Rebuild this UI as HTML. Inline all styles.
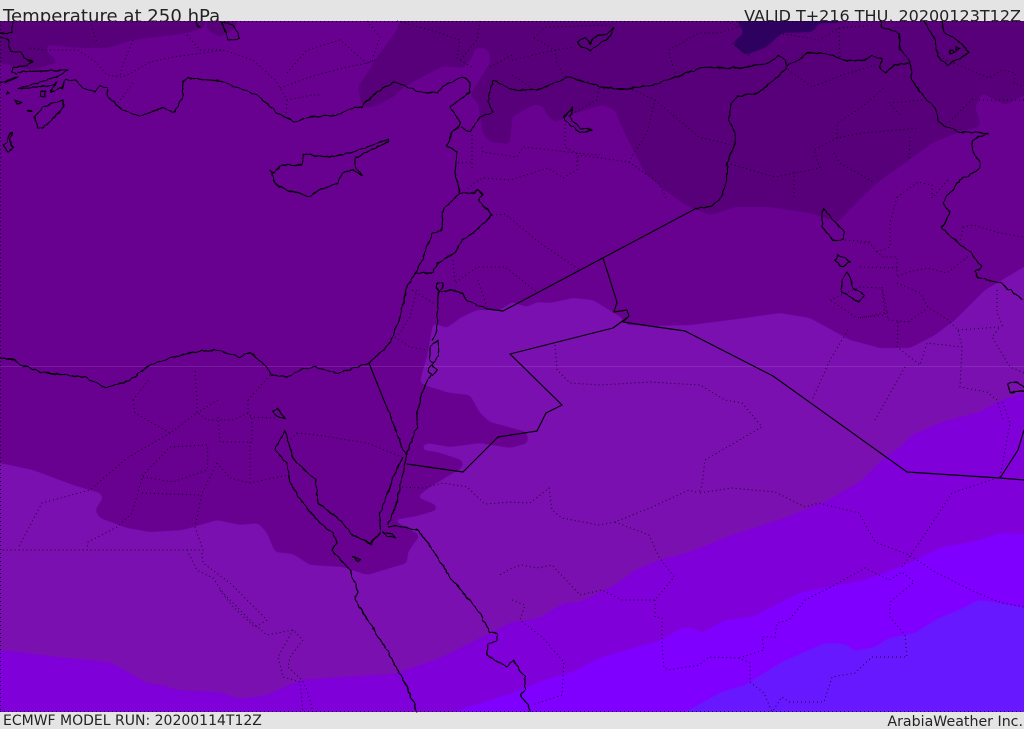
<!DOCTYPE html>
<html><head><meta charset="utf-8"><title>Temperature at 250 hPa</title>
<style>
html,body{margin:0;padding:0;background:#e4e4e4}
svg{display:block}
text{font-family:"DejaVu Sans",sans-serif;fill:#222}
.c{fill:none;stroke:#000;stroke-width:1.15;stroke-linejoin:round}
.d{fill:none;stroke:#000;stroke-width:1;stroke-dasharray:1 3;opacity:.78}
</style></head><body>
<svg width="1024" height="729" viewBox="0 0 1024 729" xmlns="http://www.w3.org/2000/svg">
<defs>
<clipPath id="m"><rect x="0" y="21" width="1024" height="691"/></clipPath>
<filter id="s" filterUnits="userSpaceOnUse" x="-40" y="-10" width="1104" height="760" color-interpolation-filters="sRGB">
<feGaussianBlur stdDeviation="2.4"/>
<feComponentTransfer><feFuncA type="linear" slope="6" intercept="-2.5"/></feComponentTransfer>
</filter>
<filter id="w" filterUnits="userSpaceOnUse" x="0" y="0" width="1024" height="729" color-interpolation-filters="sRGB">
<feTurbulence type="fractalNoise" baseFrequency=".16" numOctaves="2" seed="4" result="n"/>
<feDisplacementMap in="SourceGraphic" in2="n" scale="3.2" xChannelSelector="R" yChannelSelector="G"/>
</filter>
</defs>
<rect width="1024" height="729" fill="#e4e4e4"/>
<text x="3" y="22" font-size="18.1">Temperature at 250 hPa</text>
<text x="1021" y="21.5" font-size="16" text-anchor="end">VALID T+216 THU, 20200123T12Z</text>
<text x="3" y="725" font-size="14">ECMWF MODEL RUN: 20200114T12Z</text>
<text x="1023" y="726" font-size="14.2" text-anchor="end">ArabiaWeather Inc.</text>

<g clip-path="url(#m)">
<rect x="0" y="21" width="1024" height="691" fill="#680090"/>
<!-- dark -->
<g fill="#57007a">
<polygon filter="url(#s)" points="-20,0 -20,60 0,63 33,70 58,62 45,50 48,45 83,48 107,48 133,40 187,33 205,27 207,0"/>
<polygon filter="url(#s)" points="205,0 207,30 220,37 233,30 246,0"/>
<polygon filter="url(#s)" points="410,0 395,33 380,53 358,87 362,107 373,107 393,97 407,85 443,66 463,68 473,57 473,50 483,47 490,53 490,63 470,95 478,103 480,115 483,133 490,142 510,144 512,117 535,104 544,107 547,115 555,122 575,113 602,105 615,110 620,123 628,140 645,173 662,188 685,205 710,215 735,207 770,207 810,213 838,222 859,200 877,183 909,160 932,143 959,132 979,127 980,122 975,107 982,93 1005,105 1044,85 1044,0"/>
</g>
<polygon points="62,62 72,53 78,58 70,63" fill="#680090"/>
<polygon filter="url(#s)" points="725,0 744,33 732,43 745,55 765,48 782,33 812,32 820,23 839,23 850,0" fill="#2e005f"/>
<!-- light -->
<polygon filter="url(#s)" fill="#7a10b0" points="-20,460 0,463 33,470 73,485 100,493 103,498 95,510 100,518 127,528 150,532 183,530 217,520 240,525 258,523 267,533 275,552 293,554 310,565 343,567 367,575 407,563 408,552 420,535 393,520 417,516 437,510 436,505 417,497 430,487 463,467 462,460 437,452 423,450 422,447 427,443 450,447 480,443 510,448 528,443 527,432 490,422 480,413 470,395 450,393 430,387 420,383 422,373 427,357 433,323 447,328 460,318 477,310 500,310 512,302 527,307 537,302 550,303 573,298 593,300 622,318 627,325 650,326 690,325 730,320 780,313 810,318 850,340 880,348 910,348 935,335 955,320 985,290 1044,255 1044,740 -20,740"/>
<!-- violet -->
<polygon filter="url(#s)" fill="#7f00d8" points="-20,650 0,650 20,652 57,657 110,662 147,683 163,685 177,690 220,692 240,699 267,695 300,680 353,676 393,674 440,658 512,622 539,618 564,603 579,602 615,585 635,570 659,560 689,552 732,535 785,518 832,498 862,480 884,458 900,447 912,435 942,422 979,412 1002,400 1044,386 1044,740 -20,740"/>
<!-- bright -->
<polygon filter="url(#s)" fill="#8000ff" points="400,730 453,712 512,693 545,680 572,672 602,657 659,641 682,628 692,628 702,633 725,620 752,617 799,593 822,588 865,580 905,565 942,547 972,542 1002,533 1044,535 1044,740 400,740"/>
<!-- blue -->
<polygon filter="url(#s)" fill="#6818ff" points="650,735 685,712 722,692 745,685 782,662 825,643 845,644 855,651 875,647 889,638 915,633 939,618 959,610 979,600 1044,610 1044,740 650,740"/>
</g>
<line x1="0" y1="366.5" x2="1024" y2="366.5" stroke="#fff" stroke-opacity=".1"/>

<!-- dotted borders -->
<g class="d">
<path d="M0,21.5H1024M0,711.5H1024M.5,21V712"/>
<path d="M78,50L97,63 107,75 122,77 133,72 150,62 173,57 203,53 223,50 253,60 275,80 280,88 287,100 312,95 320,95"/>
<path d="M133,40L122,67 120,77M133,83L115,107M187,35L200,50 223,50M90,21L97,43M30,48L45,50 78,50"/>
<path d="M287,73L307,50 340,40 363,60 367,63 375,60M280,88L310,77 343,68 367,63 375,60M287,100L286,115M367,21L380,37 373,57"/>
<path d="M397,21L437,32 460,40 457,58 473,68M480,21L477,40 460,60M490,67L512,55M472,135V170M482,147L483,152 517,157 523,147 577,153 600,155M577,153V170L563,178 548,168 510,180 483,178 475,182 467,190M458,163L473,162"/>
<path d="M492,215L505,214 540,243 580,270M453,260L455,283 477,267 505,267 537,292M478,280L488,310"/>
<path d="M512,60L555,50 575,47M534,38L545,27 612,25M534,38L555,50 557,63 565,78M512,75L535,90M599,88L597,100 567,117"/>
<path d="M629,88L655,100 647,133 634,153 629,162 579,155M655,100L699,137 732,145"/>
<path d="M565,120L565,147 579,155 577,163M629,162L659,183 667,200"/>
<path d="M727,163L775,177 820,168 814,150 837,138 862,133 919,128M794,172V200M837,138L837,123 862,107 885,87M834,153L840,163 875,183M910,137L909,160"/>
<path d="M785,67L812,87 842,75 875,65M669,53L675,73M669,50L699,33 719,33 739,27 725,21M732,43L752,57M779,33L819,40 839,28 875,25M839,28L840,57"/>
<path d="M939,57L989,78 1002,70 1015,73 1014,83 1024,87M922,100L889,103 902,117M979,100H1024M949,122L975,97"/>
<path d="M897,197L918,182 932,185 932,198 948,180M897,197L890,223 890,247 877,252 883,257 897,257 897,277 908,272 927,268 947,273 970,255M860,267L897,268M897,283L920,293 928,307 948,320 958,330 962,347 960,387 987,392 997,400 1003,420"/>
<path d="M860,318L887,312 888,320 908,322 928,308M898,322L897,347 920,365 927,343 962,347M905,367L875,420M958,330L1000,327 992,337 1010,367 1024,373M997,290V313L1003,327M963,227L973,225 1000,233 1023,237M963,227L960,243M882,287L887,312M860,243L870,243 877,252"/>
<path d="M845,240L870,242M830,300L860,287 882,288 885,315 857,318 830,300M848,330L830,360 812,400"/>
<path d="M555,345L557,370 570,383 600,385 650,382 700,385 725,400 742,403 762,427 705,460 702,485 699,493 732,488 775,492 805,507 819,503 859,513 875,542 909,555 917,560 935,572 975,592 1002,603 1024,607"/>
<path d="M402,487L423,488 443,483 467,487 485,504 512,502 530,503 549,488 552,510 562,518 599,525 615,522 652,507 689,490 699,493"/>
<path d="M615,522L649,535 659,557 674,577 655,600 622,600 602,590 580,595 552,565 537,568 522,565 512,568 500,575"/>
<path d="M655,600L655,617 662,618 662,643 664,668 669,670 699,665 709,657 739,658 750,663 750,682 764,693 772,712"/>
<path d="M739,658L764,650 762,637 775,637 777,623 789,620 805,600 829,588 865,568 889,580 902,572 914,582 890,602 890,617 905,635 907,657 872,657 855,673 832,677 824,702 789,702 782,697 772,712"/>
<path d="M902,567L919,543 952,493 1000,477 1010,423 1002,400"/>
<path d="M512,600L525,605 520,620 542,637 564,662 562,695 532,705"/>
<path d="M412,290L433,303M417,290L410,317 397,337M395,337L410,347 427,350"/>
<path d="M297,433L317,435 367,443 402,457M288,442L297,433"/>
<path d="M133,400L135,413 170,433 197,413 197,400M218,400L197,413M218,417L220,442 252,442 252,417 248,413 233,420 207,420 197,412M250,417L278,418M248,400V413M133,400L150,378M197,400L195,370M248,400L270,375"/>
<path d="M170,433L127,458 90,490 42,503 18,548M207,445L170,447 143,475 132,513 117,527 88,542 87,550M143,477L173,482 207,470 208,457 207,445M142,493L200,495"/>
<path d="M217,463L202,493 195,527 203,550H0M217,463L230,478 250,483 288,475M250,442V483"/>
<path d="M187,550L197,570 213,578 223,593 253,623 267,635 293,630 303,640 290,657 288,667 302,680 307,690 313,712"/>
<path d="M202,553L203,563 230,583 267,620 255,627 233,607 220,590M293,630L278,657 283,677 300,682 303,712"/>
</g>

<!-- straight borders -->
<g class="c">
<path d="M695,209L503,311 488,309"/>
<path d="M603,258L617,302 614,312 627,310 629,316 623,322 650,326 685,331 773,376 907,472 1000,478 1024,480M1000,478L1018,450 1024,430"/>
<path d="M407,464L463,472 498,437 537,431 546,413 562,405 510,354 613,328 628,317"/>
<path d="M369,363L385,403"/>
</g>
<!-- coast / wiggly -->
<g class="c" filter="url(#w)">
<path d="M0,37L8,40 10,52 20,52 25,58 32,62 23,67 13,67 12,72 17,75M17,72L68,70 57,77 40,82 22,87 18,89 30,88 53,85 57,82 50,92 62,88 65,80 75,80 83,88 95,92 100,85 107,88 108,97 120,108 130,113 140,116 163,108 175,112 182,98 183,82 188,78 220,81 257,95 277,113 295,122 310,117 337,115 353,108 362,107 373,95 393,82 405,86 420,92 437,93 442,87 462,77 470,82 470,92 450,107 460,122 458,127 452,132 447,145 457,152 455,173 460,193 443,210 442,230 433,233 420,265 415,273 407,287 400,317 390,343 369,363 338,373 313,367 300,370 287,377 272,375 265,365 250,352 240,357 215,350 195,352 170,358 150,365 130,380 105,388 85,377 65,375 45,373 20,365 15,360 0,358"/>
<path d="M460,127L470,132 480,117 493,112 488,102 493,80 513,90 537,90 570,77 600,87 625,89 652,85 679,76 702,67 725,68 742,68 769,63 779,56 785,60 787,66 802,58 807,53 825,53 845,60 862,61 872,56 882,59 880,68 885,73 895,65 909,63"/>
<path d="M787,68L759,93 737,96 730,107 729,120 735,133 735,143 727,163 727,183 719,200 712,206 695,209"/>
<path d="M460,193L475,193 477,190 483,195 478,200 492,215 473,233 462,240 455,253 437,263 433,273 415,273"/>
<path d="M437,283L442,283 443,288 439,292 436,287ZM438,293L450,290 462,293 468,302 488,309M438,293L437,330 432,340"/>
<path d="M430,347L438,340 439,355 433,364 430,360ZM428,368L432,365 437,370 433,375 428,372ZM431,375L423,390 417,413 417,427 407,453 402,477 397,502 388,525M403,457L393,477 380,513 380,533 371,545"/>
<path d="M385,403L392,420 403,450 407,455"/>
<path d="M285,430L275,450 287,463 290,483 303,503 320,523 333,533 337,543 332,550 350,570 358,592 355,600 387,650 407,687 417,712M285,430L293,458 315,480 318,503 340,520 353,535 370,544 380,533"/>
<path d="M388,527L395,526 418,530 433,550 450,577 480,613 490,632 497,633 497,640 488,645 487,655 507,667 513,660 525,677 525,690 520,695 528,705 530,712"/>
<path d="M272,412L277,408 285,418 278,417ZM383,532L390,534 396,537 388,537ZM353,557L360,559 358,561Z"/>
<path d="M388,140L367,147 347,154 327,157 304,154 302,165 283,165 273,173 270,170 275,183 287,191 300,193 308,197 320,190 338,183 342,173 353,170 363,176 355,167 355,158 388,142Z"/>
<path d="M63,100L43,107 35,117 38,128 43,128 55,117 63,107Z"/>
<path d="M0,83L18,77 5,83M7,92L10,93 7,94ZM40,92L45,91 45,97 40,96ZM15,100L22,103 17,104ZM27,111H32L28,112ZM10,133L7,143 3,145 8,152 13,148 10,140 12,133ZM13,22L12,33 0,33M222,22L233,25 240,38 228,41ZM195,21L200,28"/>
<path d="M577,42L585,38 590,44 597,35 606,35 614,27 610,37 590,50 579,45ZM564,117L573,107 570,117 580,128 592,130 580,133 565,120Z"/>
<path d="M880,21L882,27 899,33 900,50 910,60 912,80 924,97 935,107 939,123 959,132 989,133 972,140 972,150 980,163 979,170 960,180 948,195 943,203 950,212 942,228 958,243 970,252 982,267 975,272 978,278 1000,283 1023,300"/>
<path d="M924,21L935,40 937,55 947,65 969,53 960,42 944,32 942,21M950,50L955,52 950,54ZM956,47L960,48 956,50Z"/>
<path d="M823,208L822,227 833,240 843,240 845,232 835,222ZM838,255L835,260 842,267 850,262 845,258ZM847,272L842,280 842,292 858,302 865,295 853,288 850,277Z"/>
<path d="M1008,383L1017,382 1024,388M1010,393L1024,391M1008,383L1010,393"/>
</g>
</svg>
</body></html>
